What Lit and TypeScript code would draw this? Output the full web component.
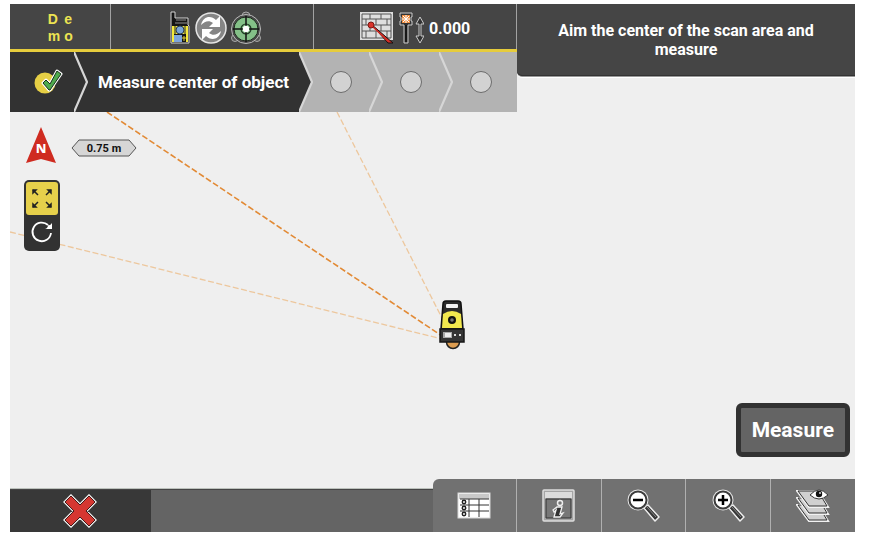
import { LitElement, html, css, svg } from "lit";
import { customElement } from "lit/decorators.js";

const reset = css`
  * { box-sizing: border-box; }
  :host { display: block; box-sizing: border-box; font-family: Roboto, "Open Sans", sans-serif; font-weight: 700; color: #fff; }
  svg { display: block; flex: none; }
  button { font: inherit; color: inherit; border: 0; padding: 0; margin: 0; background: none; cursor: pointer; }
`;

@customElement("status-bar")
class StatusBar extends LitElement {
  static styles = [reset, css`
    .bar { display: grid; grid-template-columns: 1fr 2fr 2fr; height: 48px; background: #454545; border-bottom: 3px solid #e6cc3c; }
    .cell { display: flex; align-items: center; justify-content: center; padding-top: 3px; border-right: 1px solid #a2a2a2; }
    .demo { display: grid; grid-template-columns: auto auto; column-gap: 4px; font-family: "Liberation Sans", sans-serif; font-size: 14px; line-height: 17px; color: #ece352; }
    .icons { gap: 3px; padding-left: 8px; }
    .height { gap: 5px; font-size: 16px; }
  `];
  render() {
    return html`<div class="bar">
      <div class="cell"><div class="demo"><span>D</span><span>e</span><span>m</span><span>o</span></div></div>
      <div class="cell icons">
        <svg width="22" height="34" viewBox="0 0 22 34" aria-hidden="true">
          <path d="M1 1h4v6h13v7l1 1v17H1z" fill="#151515" stroke="#d4d4d4"/>
          <path d="M6 9h10M5 12h12" stroke="#8f8f8f" stroke-width="1.200"/>
          <path d="M2 15h16v8H2z" fill="#f3e93c"/>
          <path d="M5 15v8M15 15v8" stroke="#222"/>
          <circle cx="10" cy="19" r="4" fill="#79a5d8" stroke="#2a3b50"/>
          <path d="M2 23h2v8H2zM16 23h2v8h-2z" fill="#f3e93c"/>
          <path d="M4 24h8v7H4z" fill="#7da5dc"/>
          <path d="M14 25v5M12 27h4" stroke="#e0cf3a"/>
        </svg>
        <svg width="32" height="34" viewBox="0 0 32 34" aria-hidden="true">
          <circle cx="16" cy="17" r="15" fill="#858585" stroke="#e6e6e6" stroke-width="1.500"/>
          <path d="M6 14C8 5 16 4 21 9l4-4v11H14l4-4c-4-3-8-2-12 2z" fill="#fff"/>
          <path d="M6 14C8 5 16 4 21 9l4-4v11H14l4-4c-4-3-8-2-12 2z" fill="#fff" transform="rotate(180 16 17)"/>
        </svg>
        <svg width="32" height="34" viewBox="0 0 32 34" aria-hidden="true">
          <circle cx="16" cy="5" r="4" fill="#555" stroke="#aaa"/><circle cx="5" cy="27" r="3.500" fill="#555" stroke="#aaa"/><circle cx="27" cy="27" r="3.500" fill="#555" stroke="#aaa"/>
          <circle cx="16" cy="18" r="14.500" fill="#484848" stroke="#bbb"/>
          <circle cx="16" cy="18" r="12" fill="#84c088" stroke="#1f2a20"/>
          <circle cx="16" cy="18" r="5" fill="none" stroke="#1f3a23" stroke-width="1.200"/>
          <path d="M16 5v26M3 18h26" stroke="#111" stroke-width="1.500"/><circle cx="16" cy="18" r="3.200" fill="#fff"/>
        </svg>
      </div>
      <div class="cell height">
        <svg width="34" height="34" viewBox="0 0 34 34" aria-hidden="true">
          <path d="M1 2h31v26H1z" fill="#dedede" stroke="#ddd" stroke-width="2"/>
          <path d="M2 3h29v24H2zM2 8h29M2 14h29M2 20h29M10 3v5M21 3v5M6 8v6M16 8v6M27 8v6M10 14v6M21 14v6M6 20v7M16 20v7M27 20v7" fill="none" stroke="#555"/>
          <path d="m11 13 22 19h-5z" fill="#d42d26" stroke="#161010"/>
          <path d="m11 14 17 16" stroke="#d42d26" stroke-width="1.500"/>
          <circle cx="11" cy="14" r="3" fill="#da332b" stroke="#7c1914"/>
        </svg>
        <svg width="25" height="34" viewBox="0 0 25 34" aria-hidden="true">
          <path d="M1 2h12v4h-1v4h1v4H9v18H5V14H1v-4h1V6H1z" fill="#333" stroke="#ccc"/>
          <path d="M3 4h8v8H3z" fill="#ee8d40"/><path d="m4 5 6 6m0-6-6 6M7 4v8M3 8h8" stroke="#fff"/>
          <path d="M7 14v17" stroke="#111" stroke-width="1.500"/>
          <path d="m21 6 4 7h-3v12h3l-4 7-4-7h3V13h-3z" fill="#333" stroke="#ccc"/>
        </svg>
        <span>0.000</span>
      </div>
    </div>`;
  }
}

@customElement("wizard-steps")
class WizardSteps extends LitElement {
  static styles = [reset, css`
    .steps { display: flex; list-style: none; margin: 0; padding: 0; height: 60px; background: #b3b3b3; }
    .step { display: flex; align-items: center; flex: none; width: 70px; }
    .body { display: flex; flex: 1; height: 100%; align-items: center; justify-content: center; white-space: nowrap; }
    .dark { background: #323232; }
    .done { width: 78px; }
    .done .body { padding-left: 12px; }
    .current { flex: 1; background: none; font-size: 17px; }
    .current .body { background: #323232; }
    .last { width: 64px; padding-right: 8px; }
    .dot { width: 22px; height: 22px; border-radius: 50%; background: #d2d2d2; border: 1px solid #6c6c6c; }
  `];
  chevron(fill: string) {
    return html`<svg width="14" height="60" viewBox="0 0 14 60" aria-hidden="true">
      <path d="M0 0 13 30 0 60z" fill=${fill}/><path d="M0 0 13 30 0 60" fill="none" stroke="#d6d6d6" stroke-width="2.200"/></svg>`;
  }
  render() {
    return html`<ol class="steps">
      <li class="step dark done"><span class="body">
        <svg width="30" height="30" viewBox="0 0 30 30" role="img" aria-label="Done">
          <circle cx="12" cy="16" r="10.500" fill="#e6cf45"/>
          <path d="m10 16 3-3 4 4 7-13 4 3-11 16h-1z" fill="#4faa4d" stroke="#fff" stroke-width="3" stroke-linejoin="round"/>
          <path d="m10 16 3-3 4 4 7-13 4 3-11 16h-1z" fill="#4faa4d" stroke="#17321a"/>
        </svg></span>${this.chevron("#323232")}</li>
      <li class="step current" aria-current="step"><span class="body">Measure center of object</span>${this.chevron("#323232")}</li>
      <li class="step"><span class="body"><span class="dot"></span></span>${this.chevron("#b3b3b3")}</li>
      <li class="step"><span class="body"><span class="dot"></span></span>${this.chevron("#b3b3b3")}</li>
      <li class="step last"><span class="body"><span class="dot"></span></span></li>
    </ol>`;
  }
}

@customElement("map-view")
class MapView extends LitElement {
  static styles = [reset, css`
    :host { position: relative; overflow: hidden; }
    .map { position: absolute; inset: 0; width: 100%; height: 100%; }
    .layer { position: relative; display: flex; flex-direction: column; height: 100%; padding: 15px 5px 22px 14px; }
    .top { display: flex; align-items: center; gap: 11px; margin-bottom: 11px; }
    .north { font: 800 13px "Noto Sans", sans-serif; }
    .scale { font: 700 11px Roboto, sans-serif; }
    .tools { display: flex; flex-direction: column; width: 36px; padding: 2px; border-radius: 5px; background: #323232; }
    .tool { display: grid; place-items: center; height: 34px; border-radius: 3px; }
    .active { height: 33px; background: #e6d04b; }
    .measure { align-self: flex-end; margin-top: auto; padding: 0 11px; height: 54px; border: 5px solid #323232; border-radius: 6px; background: #646464; font-size: 21px; }
  `];
  render() {
    return html`
      <svg class="map" viewBox="0 0 845 367" preserveAspectRatio="xMidYMid slice" aria-hidden="true">
        <g fill="none" stroke-dasharray="6 2.500">
          <path d="M327 0 434 210M0 120 432 227" stroke="#edc79d" stroke-width="1.300"/>
          <path d="M97 0 432 224" stroke="#e28a35" stroke-width="1.600"/>
        </g>
        <circle cx="443" cy="230" r="6.500" fill="#dc9c50" stroke="#222" stroke-width="1.500"/>
        <path d="M433 192q0-3 3-3h12q3 0 3 3l2 25h-22z" fill="#2c2c2c" stroke="#111" stroke-width="1.500"/>
        <path d="M433 202q9-6 18 0l1 14h-20z" fill="#f2e84e"/>
        <rect x="436" y="192" width="12" height="4" rx="1" fill="#f4f4f4"/>
        <circle cx="442" cy="208" r="4" fill="#111"/><circle cx="442" cy="208" r="1.800" fill="#777"/>
        <path d="M430 217h24v13h-24z" fill="#353535" stroke="#171717" stroke-width="1.500"/>
        <path d="M433 220h9v6h-9z" fill="#aaa"/><path d="M435 221h6v4h-6z" fill="#eee"/><path d="M444 222h2v2h-2zM449 222h2v2h-2z" fill="#ddd"/>
      </svg>
      <div class="layer">
        <div class="top">
          <svg width="36" height="42" viewBox="0 0 36 42">
            <path d="m17 0 15 36-15-4-15 4z" fill="#cf2b20"/><text class="north" x="17" y="26" text-anchor="middle" fill="#fff">N</text>
          </svg>
          <svg width="67" height="18" viewBox="0 0 67 18">
            <path d="m1 9 7-8h50l7 8-7 8H8z" fill="#d6d6d6" stroke="#555"/><text class="scale" x="33" y="13" text-anchor="middle" fill="#111">0.75 m</text>
          </svg>
        </div>
        <div class="tools">
          <button class="tool active" aria-label="Zoom to extents">
            <svg width="24" height="24" viewBox="0 0 24 24" fill="#222" stroke="#222" stroke-width="1.500">
              <path d="m3 3 5 5M21 3l-5 5M3 20l5-5M21 20l-5-5"/>
              <path d="M3 6V3h3zM18 3h3v3zM3 17v3h3zM21 17v3h-3z"/>
            </svg>
          </button>
          <button class="tool" aria-label="Rotate view">
            <svg width="24" height="24" viewBox="0 0 24 24"><path d="M21 13A9.300 9.300 0 1 1 18 5" fill="none" stroke="#fff" stroke-width="1.800"/><path d="M22 3v6h-7q3-1 3-4 2 1 4-2z" fill="#fff"/></svg>
          </button>
        </div>
        <button class="measure">Measure</button>
      </div>`;
  }
}

const lens = (sign: string) => svg`
  <path d="m18 19 4-3 11 12-4 4z" fill="#333" stroke="#eee" stroke-width="1.500" stroke-linejoin="round"/>
  <path d="m20 18 10 11" stroke="#3a3a3a" stroke-width="3"/><path d="m21 18 9 10" stroke="#888"/>
  <circle cx="12" cy="11" r="10.500" fill="#e4e4e4"/><circle cx="12" cy="11" r="8.500" fill="#fff" stroke="#3c3c3c" stroke-width="2"/>
  <path d=${sign} stroke="#000" stroke-width="2.500"/>`;

const sheet = (y: number) => svg`<g transform=${`translate(0 ${y})`}>
  <path d="M1 2h21l10 16H13z" fill="#d4d4d4" stroke="#f2f2f2" stroke-width="2"/>
  <path d="M2 2h20l9 15H13z" fill="#d0d0d0" stroke="#333"/></g>`;

const tools = [
  { label: "Table", art: svg`
    <rect x="1" y="4" width="32" height="25" fill="#fff" stroke="#d7d7d7"/><path d="M2 5h30v5H2z" fill="#c9c9c9"/>
    <path d="M3 10h29M3 16h29M3 22h29M12 10v18M22 10v18" fill="none" stroke="#333"/>
    <g fill="#fff" stroke="#222" stroke-width="1.500"><circle cx="7" cy="13" r="1.700"/><circle cx="7" cy="19" r="1.700"/><circle cx="7" cy="25" r="1.700"/></g>` },
  { label: "Information", art: svg`
    <rect x="1" y="1" width="31" height="31" rx="1" fill="#a5a5a5" stroke="#ddd" stroke-width="1.500"/><path d="M3 3h27v6H3z" fill="#dcdcdc"/>
    <path d="M4 10h25v19H4z" fill="#777" stroke="#333"/>
    <circle cx="18" cy="14" r="2.500" fill="#777" stroke="#eee" stroke-width="1.500"/>
    <path d="m11 21 4-3h5l-2 7 3-1-3 4h-6l2-7-2 2z" fill="#333" stroke="#f2f2f2" stroke-width="1.300"/>` },
  { label: "Zoom out", art: lens("M7 11h10") },
  { label: "Zoom in", art: lens("M7 11h10M12 6v10") },
  { label: "Layers", art: svg`${sheet(14)}${sheet(7)}${sheet(0)}
    <path d="M14 6q9-10 18 0-9 8-18 0z" fill="#fff" stroke="#333"/><circle cx="23" cy="5" r="3.200" fill="#111"/><circle cx="24" cy="4" r="1" fill="#ddd"/>` },
];

@customElement("bottom-bar")
class BottomBar extends LitElement {
  static styles = [reset, css`
    .bar { display: grid; grid-template-columns: 1fr 1fr; align-items: end; }
    .left { display: grid; grid-template-columns: 1fr 2fr; height: 43px; background: #646464; border-top: 1px solid #454545; box-shadow: 0 -1px #bcc1bc; }
    .cancel { display: grid; place-items: center; background: #383838; }
    .tools { display: grid; grid-template-columns: repeat(5, 1fr); height: 53px; border-top-left-radius: 6px; overflow: hidden; background: #717171; }
    .tool { display: grid; place-items: center; border-right: 1px solid #b0b0b0; }
    .tool:last-child { border-right: 0; }
  `];
  render() {
    return html`<footer class="bar">
      <div class="left"><button class="cancel" aria-label="Cancel">
        <svg width="34" height="34" viewBox="0 0 34 34">
          <path d="m8 2 9 9 9-9 6 6-9 9 9 9-6 6-9-9-9 9-6-6 9-9-9-9z" fill="#dc3932" stroke="#eee" stroke-width="3"/>
          <path d="m8 2 9 9 9-9 6 6-9 9 9 9-6 6-9-9-9 9-6-6 9-9-9-9z" fill="#d53731" stroke="#451b18" stroke-width="1"/>
        </svg></button></div>
      <div class="tools">${tools.map((t) => html`<button class="tool" aria-label=${t.label}>
        <svg width="34" height="34" viewBox="0 0 34 34">${t.art}</svg></button>`)}</div>
    </footer>`;
  }
}

@customElement("app-root")
class AppRoot extends LitElement {
  static styles = [reset, css`
    :host { background: #fff; height: 100vh; padding: 4px 18px 14px 10px; }
    .app { display: flex; flex-direction: column; height: 100%; background: #efefef; }
    .head { display: grid; grid-template-columns: 3fr 2fr; align-items: start; }
    .prompt { margin: 0; padding: 17px 24px; background: #454545; border-bottom-left-radius: 5px; box-shadow: inset 0 -1px #333, 0 1px #999, 0 2px #fff; font-size: 16px; line-height: 19px; text-align: center; }
    .map { flex: 1; min-height: 0; }
  `];
  render() {
    return html`<div class="app">
      <header class="head">
        <div><status-bar></status-bar><wizard-steps></wizard-steps></div>
        <p class="prompt">Aim the center of the scan area and measure</p>
      </header>
      <map-view class="map"></map-view>
      <bottom-bar></bottom-bar>
    </div>`;
  }
}
